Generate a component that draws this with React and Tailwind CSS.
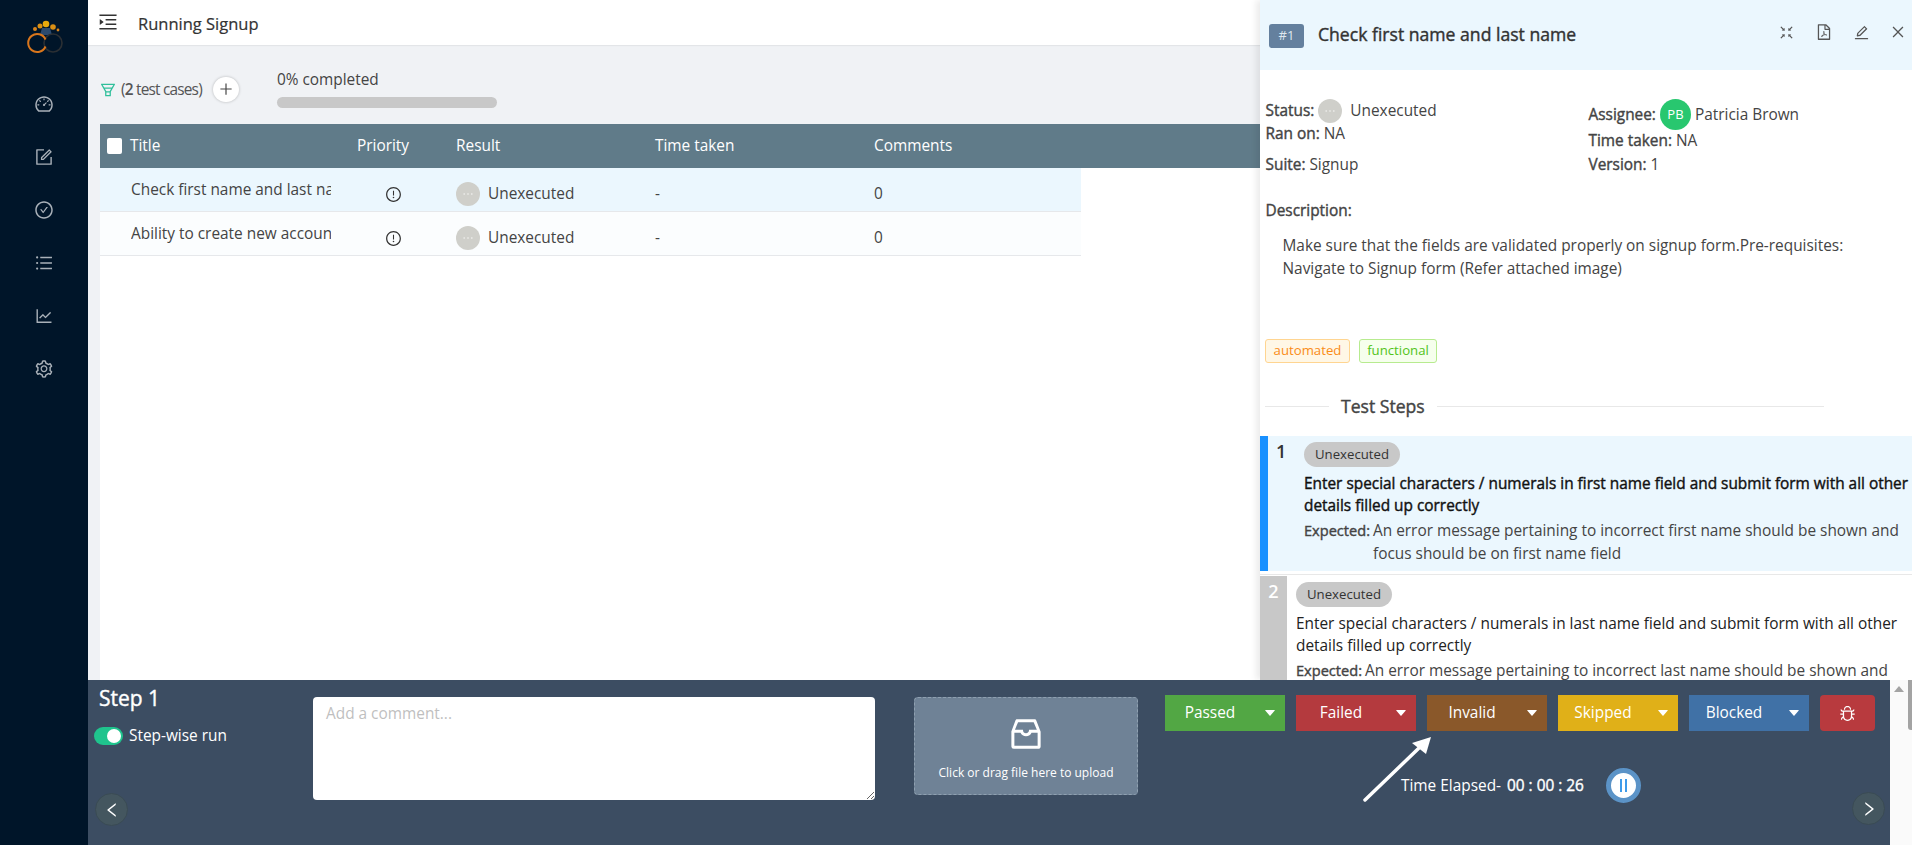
import {
  AiOutlineDashboard,
  AiOutlineForm,
  AiOutlineCheckCircle,
  AiOutlineBars,
  AiOutlineLineChart,
  AiOutlineSetting,
  AiOutlineMenuUnfold,
  AiOutlineFunnelPlot,
  AiOutlinePlus,
  AiOutlineExclamationCircle,
  AiOutlineEllipsis,
  AiOutlineFullscreenExit,
  AiOutlineFilePdf,
  AiOutlineEdit,
  AiOutlineClose,
  AiOutlineInbox,
  AiOutlineBug,
  AiOutlineLeft,
  AiOutlineRight,
  AiFillCaretDown,
} from "react-icons/ai";

const navIcons = [
  AiOutlineDashboard,
  AiOutlineForm,
  AiOutlineCheckCircle,
  AiOutlineBars,
  AiOutlineLineChart,
  AiOutlineSetting,
];

const rows = [
  { title: "Check first name and last name", active: true },
  { title: "Ability to create new account", active: false },
];

const results = [
  { label: "Passed", color: "bg-[#52a744]" },
  { label: "Failed", color: "bg-[#b43a3e]" },
  { label: "Invalid", color: "bg-[#8a582a]" },
  { label: "Skipped", color: "bg-[#e0b018]" },
  { label: "Blocked", color: "bg-[#4071a6]" },
];

const heavy = "[-webkit-text-stroke:0.4px_currentColor]";

function Logo() {
  return (
    <svg width="40" height="40" viewBox="0 0 40 40" fill="none">
      <path d="M16 9h8l2 7H14z" fill="#2c4a6e" />
      <circle cx="27" cy="24" r="9" stroke="#2b2f33" strokeWidth="1.6" />
      <path d="M19.5 27.5A9 9 0 1 1 19.5 20.5" stroke="#d9761c" strokeWidth="2" />
      <circle cx="20" cy="5" r="3.3" fill="#e8a90c" />
      <circle cx="27" cy="8" r="2.8" fill="#d98f14" />
      <circle cx="14" cy="7" r="2.5" fill="#d98f14" />
      <circle cx="9" cy="10" r="2" fill="#d9831a" />
      <circle cx="32" cy="11" r="1.4" fill="#d9831a" />
    </svg>
  );
}

function Sidebar() {
  return (
    <aside className="flex w-[88px] shrink-0 flex-col items-center bg-[#001529]">
      <div className="mt-[19px] ml-[3px]">
        <Logo />
      </div>
      <div className="mt-[35px] flex flex-col items-center gap-[33px]">
        {navIcons.map((Icon, i) => (
          <Icon key={i} className="text-[#a9b1b9]" size={20} />
        ))}
      </div>
    </aside>
  );
}

function StatusDot() {
  return (
    <span className="flex h-6 w-6 shrink-0 items-center justify-center rounded-full bg-[#cfcfca] text-white/80">
      <AiOutlineEllipsis size={14} />
    </span>
  );
}

function TestTable() {
  return (
    <div className="flex-1 bg-white">
      <div className="grid h-[44px] grid-cols-[257px_99px_199px_219px_386px] items-center bg-[#607b89] text-[15.4px] text-white">
        <div className="flex items-center pl-[7px]">
          <span className="h-4 w-[15px] rounded-[2px] bg-white" />
          <span className="ml-2">Title</span>
        </div>
        <div>Priority</div>
        <div>Result</div>
        <div>Time taken</div>
        <div>Comments</div>
      </div>
      <div className="w-[981px]">
        {rows.map((row) => (
          <div
            key={row.title}
            className={`grid h-[44px] grid-cols-[257px_99px_199px_219px_207px] items-center border-b border-[#e6e8eb] text-[15.4px] text-[#444] ${
              row.active ? "bg-[#ebf7fe]" : "bg-[#fbfdfe]"
            }`}
          >
            <div className="ml-[31px] w-[200px] overflow-hidden whitespace-nowrap">{row.title}</div>
            <div className="mt-[9px] pl-[28px]">
              <AiOutlineExclamationCircle size={17} className="text-[#333]" />
            </div>
            <div className="mt-[9px] flex items-center gap-2">
              <StatusDot />
              <span>Unexecuted</span>
            </div>
            <div className="mt-[9px]">-</div>
            <div className="mt-[9px]">0</div>
          </div>
        ))}
      </div>
    </div>
  );
}

function MainArea() {
  return (
    <main className="flex min-w-0 flex-1 flex-col bg-[#f0f2f5]">
      <header className="flex h-[45px] shrink-0 items-center bg-white pl-[11px] shadow-[0_1px_1px_rgba(0,0,0,0.05)]">
        <AiOutlineMenuUnfold size={22} className="-mt-[2px] -ml-[2px] text-[#333]" />
        <h1 className="mt-[3px] ml-[19px] text-[16.5px] text-[#333] [-webkit-text-stroke:0.2px_currentColor]">Running Signup</h1>
      </header>
      <div className="flex h-[79px] shrink-0 pl-[12px]">
        <div className="flex h-[90px] items-center text-[15.4px] text-[#555]">
          <AiOutlineFunnelPlot size={18} className="-ml-[1px] text-[#2fbf9a]" />
          <span className="ml-[4px] tracking-[-0.8px]">
            (<b className="font-semibold">2</b> test cases)
          </span>
          <span className="-mt-[2px] ml-[11px] flex h-[25px] w-[26px] items-center justify-center rounded-full bg-white text-[#444] shadow-[0_0_3px_rgba(0,0,0,0.25)]">
            <AiOutlinePlus size={16} />
          </span>
        </div>
        <div className="ml-[38px] pt-[25px]">
          <div className="text-[15.4px] leading-[20px] text-[#444]">0% completed</div>
          <div className="mt-[7px] h-[11px] w-[220px] rounded-full bg-[#c8c8c8]" />
        </div>
      </div>
      <div className="flex min-h-0 flex-1 flex-col pl-[12px]">
        <TestTable />
      </div>
    </main>
  );
}

function StepBadge() {
  return (
    <span className="flex h-[25px] w-[96px] items-center justify-center rounded-full bg-[#c8c8c8] text-[13.2px] text-[#333]">
      Unexecuted
    </span>
  );
}

function DetailPanel() {
  return (
    <section className="z-10 flex h-full w-[652px] shrink-0 flex-col overflow-hidden bg-white text-[15.4px] text-[#444] shadow-[-4px_0_6px_rgba(0,0,0,0.08)]">
      <div className="flex h-[70px] shrink-0 items-start bg-[#ebf7fe] pl-[9px]">
        <span className="mt-[24px] flex h-6 w-[35px] items-center justify-center rounded-[3px] bg-[#64809e] text-[13px] text-[#dfe7ee]">
          #1
        </span>
        <h2 className={`mt-[21px] ml-[14px] text-[17.6px] leading-[26px] text-[#333] ${heavy}`}>
          Check first name and last name
        </h2>
        <div className="mt-[23px] ml-auto flex items-center gap-[20px] pr-[6px] text-[#555]">
          <AiOutlineFullscreenExit size={17} />
          <AiOutlineFilePdf size={18} />
          <AiOutlineEdit size={17} />
          <AiOutlineClose size={16} />
        </div>
      </div>

      <div className="mt-[29px] grid grid-cols-[323px_1fr] pl-[5.5px]">
        <div>
          <div className="flex h-6 items-center">
            <span className={heavy}>Status:</span>
            <span className="ml-[4px]"><StatusDot /></span>
            <span className="ml-[8px]">Unexecuted</span>
          </div>
          <div className="h-[22px] leading-[22px]"><span className={heavy}>Ran on:</span> NA</div>
          <div className="mt-[9px] h-[22px] leading-[22px]"><span className={heavy}>Suite:</span> Signup</div>
        </div>
        <div>
          <div className="flex h-[31px] items-center">
            <span className={heavy}>Assignee:</span>
            <span className="ml-[4px] flex h-[31px] w-[31px] items-center justify-center rounded-full bg-[#28c76f] text-[13px] text-white">
              PB
            </span>
            <span className="ml-[4px]">Patricia Brown</span>
          </div>
          <div className="h-[22px] leading-[22px]"><span className={heavy}>Time taken:</span> NA</div>
          <div className="mt-[2px] h-[22px] leading-[22px]"><span className={heavy}>Version:</span> 1</div>
        </div>
      </div>

      <div className={`mt-[24px] h-[22px] pl-[5.5px] leading-[22px] ${heavy}`}>Description:</div>
      <p className="mt-[12px] pr-[40px] pl-[22.5px] leading-[23px]">
        Make sure that the fields are validated properly on signup form.Pre-requisites:
        <br />
        Navigate to Signup form (Refer attached image)
      </p>

      <div className="mt-[59px] flex gap-[9px] pl-[5px] text-[13.2px]">
        <span className="flex h-6 w-[85px] items-center justify-center rounded-[3px] border border-[#ffd591] bg-[#fff7e6] text-[#fa8c16]">
          automated
        </span>
        <span className="flex h-6 w-[78px] items-center justify-center rounded-[3px] border border-[#b7eb8f] bg-[#f6ffed] text-[#52c41a]">
          functional
        </span>
      </div>

      <div className="mt-[32px] mb-[2px] flex h-[22px] items-center pl-[5px]">
        <span className="h-px w-[64px] bg-[#e8e8e8]" />
        <span className={`mx-[12px] text-[17.6px] text-[#444] ${heavy}`}>Test Steps</span>
        <span className="h-px w-[387px] bg-[#e8e8e8]" />
      </div>

      <div className="mt-[17px] flex h-[135px] shrink-0 bg-[#ebf7fe]">
        <div className="w-[8px] bg-[#1890ff]" />
        <div className="w-[36px] pt-[3px] pl-[8px] text-[18px] leading-[24px] font-semibold text-[#333]">1</div>
        <div className="pt-[6px]">
          <StepBadge />
          <div className={`mt-[6px] w-[606px] leading-[22px] text-[#111] ${heavy}`}>
            Enter special characters / numerals in first name field and submit form with all other details filled up correctly
          </div>
          <div className="mt-[2px] flex leading-[23px]">
            <span className={`w-[69px] shrink-0 text-[14.6px] ${heavy}`}>Expected:</span>
            <span className="w-[530px]">
              An error message pertaining to incorrect first name should be shown and focus should be on first name field
            </span>
          </div>
        </div>
      </div>
      <div className="mt-[3px] h-px shrink-0 bg-[#e8e8e8]" />
      <div className="mt-[1px] flex min-h-[120px] shrink-0">
        <div className="w-[27px] bg-[#c8c8c8] pt-[3px] text-center text-[18px] leading-[24px] font-semibold text-white">2</div>
        <div className="pt-[6px] pl-[9px]">
          <StepBadge />
          <div className="mt-[6px] w-[610px] leading-[22px] text-[#222]">
            Enter special characters / numerals in last name field and submit form with all other details filled up correctly
          </div>
          <div className="mt-[2px] flex leading-[23px]">
            <span className={`w-[69px] shrink-0 text-[14.6px] ${heavy}`}>Expected:</span>
            <span className="w-[530px]">
              An error message pertaining to incorrect last name should be shown and focus should be on last name field
            </span>
          </div>
        </div>
      </div>
    </section>
  );
}

function RoundNav({ children }) {
  return (
    <span className="flex h-[33px] w-[33px] items-center justify-center rounded-full border border-[#3a4b54] bg-[#44565f] text-white">
      {children}
    </span>
  );
}

function ResultButton({ label, color }) {
  return (
    <button className={`flex h-9 w-[120px] items-center pb-[1px] text-[15.4px] text-white ${color}`}>
      <span className="w-[90px] text-center">{label}</span>
      <AiFillCaretDown size={14} className="ml-[8px]" />
    </button>
  );
}

function BottomBar() {
  return (
    <footer className="flex h-[165px] shrink-0 bg-[#3c4d62] text-white">
      <div className="flex w-[225px] shrink-0 flex-col pl-[6px]">
        <div className={`mt-[4px] pl-[5px] text-[21px] leading-[28px] ${heavy}`}>Step 1</div>
        <div className="mt-[12px] flex items-center">
          <span className="flex h-[18px] w-[29px] items-center justify-end rounded-full bg-[#1fc48d] pr-[2px]">
            <span className="h-[14px] w-[14px] rounded-full bg-white" />
          </span>
          <span className="ml-[6px] text-[15.4px]">Step-wise run</span>
        </div>
        <div className="mt-[46px] ml-[1px]">
          <RoundNav><AiOutlineLeft size={18} /></RoundNav>
        </div>
      </div>

      <textarea
        className="mt-[17px] h-[103px] w-[562px] shrink-0 rounded-[4px] bg-white px-[13px] py-[5px] text-[15.4px] text-[#333] outline-none placeholder:text-[#bfbfbf]"
        placeholder="Add a comment..."
      />

      <div className="mt-[17px] ml-[39px] flex h-[98px] w-[224px] shrink-0 flex-col items-center rounded-[4px] border border-dashed border-[#8fa0b0] bg-[#6f8296]">
        <AiOutlineInbox size={40} className="mt-[16px]" />
        <span className="mt-[10px] text-[12px]">Click or drag file here to upload</span>
      </div>

      <div className="relative mt-[15px] ml-[27px] w-[725px] shrink-0">
        <div className="flex gap-[11px]">
          {results.map((r) => (
            <ResultButton key={r.label} {...r} />
          ))}
          <button className="flex h-9 w-[55px] items-center justify-center rounded-[4px] bg-[#b83a3e]">
            <AiOutlineBug size={17} />
          </button>
        </div>
        <div className="mt-[37px] flex items-center pl-[236px] text-[15.4px]">
          <span>Time Elapsed-</span>
          <span className={`ml-[6px] ${heavy}`}>00 : 00 : 26</span>
          <span className="ml-[22px] flex h-[35px] w-[35px] items-center justify-center gap-[3px] rounded-full border-[5px] border-[#5b93c7] bg-white">
            <span className="h-[13px] w-[2px] bg-[#3e9bea]" />
            <span className="h-[13px] w-[2px] bg-[#3e9bea]" />
          </span>
        </div>
        <div className="-mt-[11px] flex justify-end pr-[5px]">
          <RoundNav><AiOutlineRight size={18} /></RoundNav>
        </div>
        {/* annotation arrow pointing at the Invalid button */}
        <svg className="absolute top-0 left-0" width="300" height="120" viewBox="0 0 300 120" fill="none">
          <path d="M200 105L254 53" stroke="white" strokeWidth="3.5" strokeLinecap="round" />
          <path d="M266 42L247 48L261 59Z" fill="white" />
        </svg>
      </div>

      <div className="flex w-[22px] shrink-0 bg-[#fafafa]">
        <div className="relative flex-1">
          <svg className="mx-auto mt-[6px]" width="10" height="6" viewBox="0 0 10 6">
            <path d="M5 0L10 6H0Z" fill="#a3a3a3" />
          </svg>
        </div>
        <div className="h-[50px] w-[4px] rounded-bl-[3px] bg-[#a3a3a3]" />
      </div>
    </footer>
  );
}

export default function App() {
  return (
    <div className="flex h-[845px] w-[1912px] overflow-hidden font-['Open_Sans',sans-serif]">
      <Sidebar />
      <div className="flex min-w-0 flex-1 flex-col">
        <div className="flex h-[680px] shrink-0 overflow-hidden">
          <MainArea />
          <DetailPanel />
        </div>
        <BottomBar />
      </div>
    </div>
  );
}
